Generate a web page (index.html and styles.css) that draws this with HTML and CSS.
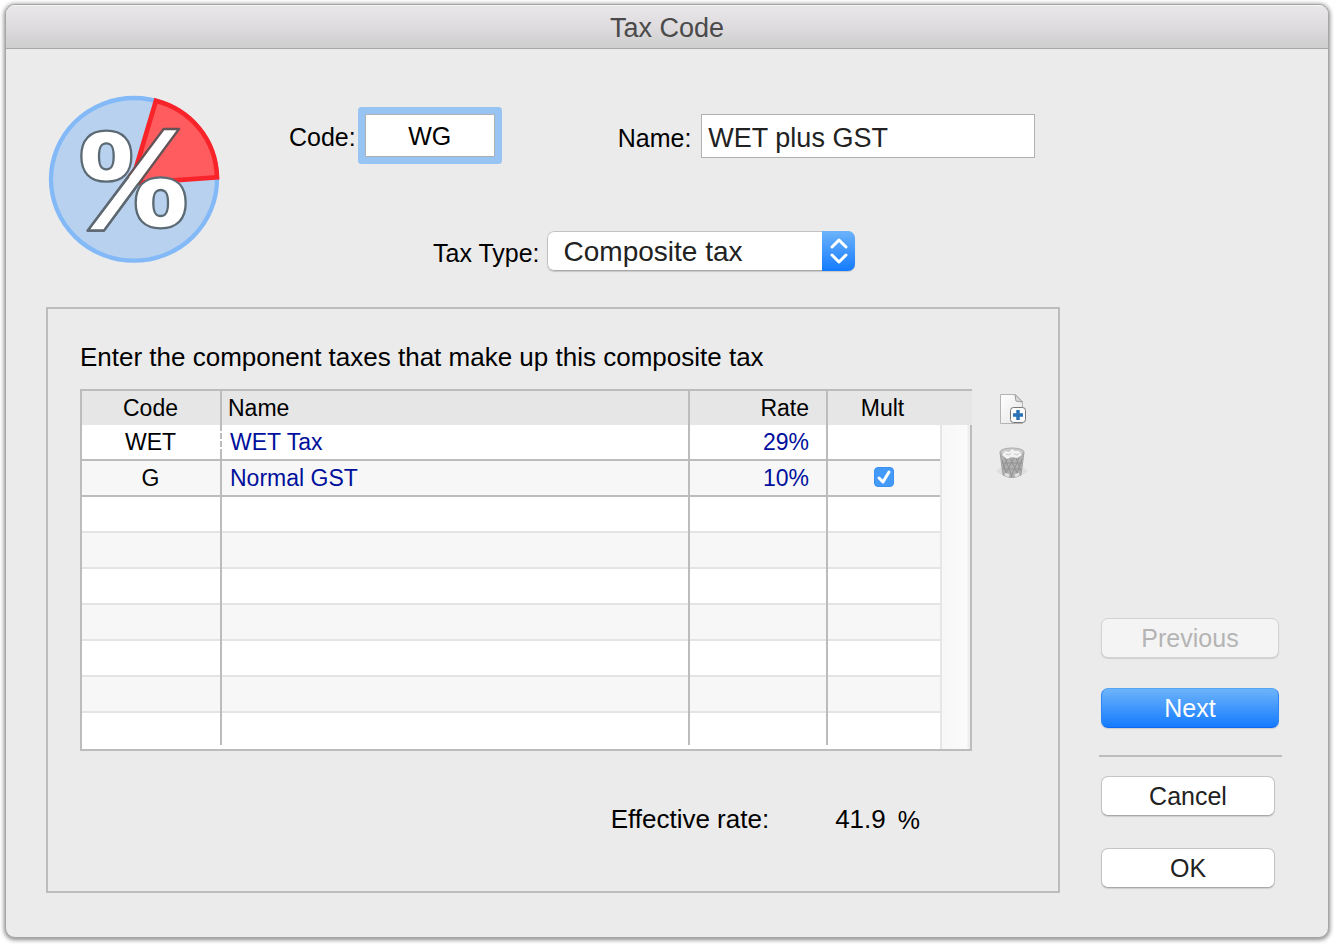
FILE: index.html
```html
<!DOCTYPE html>
<html lang="en">
<head>
<meta charset="utf-8">
<meta name="viewport" content="width=device-width, initial-scale=1">
<title>Tax Code</title>
<link rel="stylesheet" href="styles.css">
</head>
<body>
<form class="window">
  <header class="titlebar"><h1 class="title">Tax Code</h1></header>
  <div class="content">
    <main class="main">
      <div class="summary">
        <svg class="logo" viewBox="54 44 516 504" aria-hidden="true">
          <ellipse cx="312" cy="297" rx="249" ry="244" fill="#b7d1ef" stroke="#84b9f8" stroke-width="13"/>
          <path d="M304 309 L378 61 C480 88 558 175 561 291 Z" fill="#ff5c5f" stroke="#f9232a" stroke-width="14"/>
          <g fill="#fff" stroke="#5c6a74" stroke-width="7" stroke-linejoin="round" fill-rule="evenodd">
            <path d="M401 146 H447 L222 451 H173 Z" stroke="#655457"/>
            <path d="M296 289 L173 451 H222 L325 311" fill="none"/>
            <path d="M229 151 C279 151 304 180 304 227 C304 275 279 304 229 304 C179 304 154 275 154 227 C154 180 179 151 229 151 Z M229 189 C211 189 207 204 207 228 C207 252 211 267 229 267 C247 267 251 252 251 228 C251 204 247 189 229 189 Z"/>
            <path d="M392 291 C442 291 467 320 467 368 C467 415 442 444 392 444 C342 444 317 415 317 368 C317 320 342 291 392 291 Z M392 329 C374 329 370 344 370 368 C370 392 374 407 392 407 C410 407 414 392 414 368 C414 344 410 329 392 329 Z"/>
          </g>
        </svg>
        <div class="fields">
          <div class="row">
            <div class="field field-code">
              <label for="code">Code:</label>
              <input class="text code" id="code" type="text" value="WG">
            </div>
            <div class="field field-name">
              <label for="name">Name:</label>
              <input class="text name" id="name" type="text" value="WET plus GST">
            </div>
          </div>
          <div class="field field-type">
            <label for="type">Tax Type:</label>
            <div class="popup">
              <select class="popup-select" id="type"><option>Composite tax</option></select>
              <svg class="popup-arrows" viewBox="0 0 33 40" aria-hidden="true">
                <path d="M10 16 L17 9 L24 16 M10 24 L17 31 L24 24" fill="none" stroke="#fff" stroke-width="3" stroke-linecap="round" stroke-linejoin="round"/>
              </svg>
            </div>
          </div>
        </div>
      </div>

      <section class="panel">
        <p class="intro">Enter the component taxes that make up this composite tax</p>
        <div class="list">
          <table class="taxes">
            <colgroup><col class="c-code"><col><col class="c-rate"><col class="c-mult"><col class="c-scroll"></colgroup>
            <thead>
              <tr><th class="mid">Code</th><th class="left">Name</th><th class="right">Rate</th><th class="mid plain">Mult</th><th class="plain"></th></tr>
            </thead>
            <tbody>
              <tr class="filled"><td class="mid active">WET</td><td class="left link">WET Tax</td><td class="right link">29%</td><td class="plain"></td><td class="gutter" rowspan="9"></td></tr>
              <tr class="filled"><td class="mid">G</td><td class="left link">Normal GST</td><td class="right link">10%</td>
                <td class="plain"><span class="tick"><input class="tick-box" type="checkbox" checked aria-label="Mult"><svg class="tick-mark" viewBox="0 0 20 20" aria-hidden="true"><path d="M5 11 L9 15 L15 5" fill="none" stroke="#fff" stroke-width="3" stroke-linecap="round" stroke-linejoin="round"/></svg></span></td></tr>
              <tr><td></td><td></td><td></td><td class="plain"></td></tr>
              <tr><td></td><td></td><td></td><td class="plain"></td></tr>
              <tr><td></td><td></td><td></td><td class="plain"></td></tr>
              <tr><td></td><td></td><td></td><td class="plain"></td></tr>
              <tr><td></td><td></td><td></td><td class="plain"></td></tr>
              <tr><td></td><td></td><td></td><td class="plain"></td></tr>
              <tr class="last"><td></td><td></td><td></td><td class="plain"></td></tr>
            </tbody>
          </table>
          <div class="tools">
            <button class="tool" type="button" aria-label="Add tax">
              <svg viewBox="0 0 32 34" width="32" height="34" aria-hidden="true">
                <defs><linearGradient id="paper" x2="1" y2="1"><stop stop-color="#fff"/><stop offset="1" stop-color="#e4e4e4"/></linearGradient></defs>
                <path d="M4.500 2.500 H19 L26.500 10 V31.500 H4.500 Z" fill="url(#paper)" stroke="#b4b4b4"/>
                <path d="M19 2.500 L20 9 L26.500 10 Z" fill="#ddd" stroke="#999"/>
                <rect x="14.500" y="15.500" width="15" height="15" rx="3" fill="#fafafa" stroke="#777"/>
                <path d="M22 18 V28 M17 23 H27" stroke="#2a72b5" stroke-width="3.500"/>
              </svg>
            </button>
            <button class="tool" type="button" aria-label="Delete tax">
              <svg viewBox="0 0 32 34" width="32" height="34" aria-hidden="true">
                <ellipse cx="16" cy="25" rx="15" ry="5" fill="#dedede"/>
                <path d="M4 6 L7 29 Q16 34 25 29 L28 6 Z" fill="#b0b0b0" stroke="#a2a2a2"/>
                <path d="M6 14 L11 30 M9 12 L16 31 M14 12 L22 29 M20 12 L25 25 M26 13 L20 30 M23 12 L15 31 M18 12 L9 29 M12 12 L7 23 M6 17 L26 17 M7 23 L25 23" stroke="#929292" fill="none"/>
                <path d="M9 28 L13 30 M19 30 L23 28" stroke="#e2e2e2" stroke-width="3"/>
                <ellipse cx="16" cy="6" rx="12" ry="4" fill="#cacaca" stroke="#acacac"/>
                <path d="M6 9 L9 5 L13 6 L16 3 L19 5 L23 5 L26 9 L21 12 L16 11 L11 13 Z" fill="#f2f2f2"/>
                <path d="M10 8 L13 9 L15 7 M18 8 L21 9 L23 7" stroke="#c8c8c8" fill="none"/>
              </svg>
            </button>
          </div>
        </div>
        <div class="effective">
          <span>Effective rate:</span><output class="rate">41.9</output><span class="percent">%</span>
        </div>
      </section>
    </main>

    <aside class="actions">
      <div class="nav">
        <button class="button" type="button" disabled>Previous</button>
        <button class="button primary" type="button">Next</button>
      </div>
      <hr class="rule">
      <div class="confirm">
        <button class="button" type="button">Cancel</button>
        <button class="button" type="submit">OK</button>
      </div>
    </aside>
  </div>
</form>
</body>
</html>
```

FILE: styles.css
```css
* { box-sizing: border-box; }

body {
  margin: 0;
  min-height: 100vh;
  padding: 4px 5px 6px;
  display: flex;
  background: #fff;
  color: #000;
  font: 25px/30px "Liberation Sans", Arial, Helvetica, sans-serif;
}

input, select, button { font: inherit; }

.window {
  flex: 1;
  display: flex;
  flex-direction: column;
  border: 1px solid #a6a6a6;
  border-radius: 10px;
  background: #ebebeb;
  box-shadow: 0 1px 4px 1px rgba(0, 0, 0, 0.45);
  overflow: hidden;
}

.titlebar {
  height: 44px;
  display: flex;
  align-items: center;
  justify-content: center;
  padding-top: 2px;
  border-bottom: 1px solid #a8a8a8;
  background: linear-gradient(#e9e7e9, #e0dde0 45%, #cecece);
  box-shadow: inset 0 1px #f4f4f4;
}

.title {
  margin: 0;
  color: #4a4a4a;
  font-size: 27px;
  font-weight: normal;
}

.content {
  flex: 1;
  display: grid;
  grid-template-columns: minmax(0, 1fr) 183px;
  column-gap: 39px;
  padding: 46px 46px 44px 40px;
}

.main {
  display: flex;
  flex-direction: column;
}

.summary {
  display: flex;
  gap: 69px;
  padding-left: 2px;
  margin-bottom: 36px;
}

.logo {
  flex: none;
  width: 172px;
  height: 168px;
}

.fields {
  flex: 1;
  min-width: 0;
  padding-top: 19px;
}

.row {
  display: flex;
  align-items: flex-start;
  gap: 123px;
  margin-bottom: 73px;
}

.field {
  display: flex;
  align-items: center;
}

.field label { padding-top: 3px; }

.field-code { gap: 9px; }

.field-name {
  flex: 1;
  min-width: 0;
  gap: 10px;
  padding-right: 25px;
}

.field-type {
  gap: 7px;
  padding-left: 144px;
}

.text {
  min-width: 0;
  border: 1px solid #b0b0b0;
  background: #fff;
  outline: none;
}

.code {
  width: 130px;
  height: 43px;
  padding: 2px 4px 0;
  text-align: center;
  box-shadow: 0 0 0 7px #98c4f3;
  border-radius: 1px;
}

.name {
  flex: 1;
  height: 44px;
  padding: 4px 6px 0;
  color: #222;
  font-size: 27px;
}

.popup {
  display: grid;
  width: 308px;
  height: 40px;
  border-radius: 7px;
  overflow: hidden;
  box-shadow: 0 1px 1px rgba(0, 0, 0, 0.15);
}

.popup > * { grid-area: 1 / 1; }

.popup-select {
  appearance: none;
  width: 100%;
  padding: 2px 44px 0 16px;
  border: 1px solid #c2c2c2;
  border-bottom-color: #a9a9a9;
  border-radius: 7px;
  background: #fff;
  color: #222;
  font-size: 28px;
}

.popup-arrows {
  justify-self: end;
  width: 33px;
  height: 40px;
  background: linear-gradient(#6cb3fa, #147bff);
  pointer-events: none;
}

.panel {
  flex: 1;
  padding: 33px 30px 30px 32px;
  border: 2px solid #bcbcbc;
  font-size: 26px;
}

.intro { margin: 0 0 17px; }

.list {
  display: flex;
  gap: 24px;
}

.taxes {
  flex: 1;
  table-layout: fixed;
  border-collapse: separate;
  border-spacing: 0;
  border: solid #bcbcbc;
  border-width: 2px 0 2px 2px;
  font-size: 23px;
}

.c-code { width: 140px; }
.c-rate { width: 138px; }
.c-mult { width: 112px; }
.c-scroll { width: 32px; }

.taxes th, .taxes td {
  --line: #bcbcbc;
  --under: #e4e4e4;
  --fill: #fff;
  height: 36px;
  padding: 0 0 2px;
  font-weight: normal;
  line-height: 28px;
  background:
    linear-gradient(var(--line), var(--line)) right top / 2px 100% no-repeat,
    linear-gradient(var(--under), var(--under)) left bottom / 100% 2px no-repeat,
    var(--fill);
}

.taxes th {
  --under: transparent;
  --fill: #e6e6e6;
  height: 34px;
  padding: 0;
}

.taxes tr:nth-child(even) td { --fill: #f7f7f7; }
.taxes .filled td { --under: #bcbcbc; }
.taxes .plain { --line: transparent; }
.taxes .mid { text-align: center; padding-right: 3px; }
.taxes .left { text-align: left; padding-left: 8px; }
.taxes th.left { padding-left: 6px; }
.taxes .right { text-align: right; padding-right: 19px; }
.taxes .link { color: #00109c; }

.taxes .last td {
  --under: transparent;
  background-size: 2px calc(100% - 4px), 100% 2px, auto;
}

.taxes .active {
  background:
    repeating-linear-gradient(transparent 0 6px, #fff 6px 8px) right top / 2px 28px no-repeat,
    linear-gradient(#bcbcbc, #bcbcbc) right top / 2px 100% no-repeat,
    linear-gradient(#bcbcbc, #bcbcbc) left bottom / 100% 2px no-repeat,
    #fff;
}

.taxes .gutter {
  border-left: 2px solid #e6e6e6;
  border-right: 2px solid #bcbcbc;
  background: linear-gradient(90deg, #f7f7f7, #fbfbfb 90%, #eee 92%);
}

.tick {
  display: grid;
  justify-content: center;
  padding-bottom: 2px;
}

.tick > * {
  grid-area: 1 / 1;
  width: 20px;
  height: 20px;
  margin: 0;
}

.tick-box {
  appearance: none;
  border-radius: 4px;
  border: 1px solid #3b8ff0;
  background: #439af8;
}

.tick-mark { pointer-events: none; }

.tools {
  width: 32px;
  display: flex;
  flex-direction: column;
  gap: 20px;
  padding-top: 3px;
}

.tool {
  height: 34px;
  padding: 0;
  border: 0;
  background: none;
}

.tool svg { display: block; }

.effective {
  display: flex;
  justify-content: flex-end;
  align-items: flex-end;
  margin-top: 53px;
  padding-right: 108px;
}

.rate { margin: 0 12px 0 66px; }
.percent { line-height: 28px; font-size: 25px; }

.actions {
  display: flex;
  flex-direction: column;
  justify-content: flex-end;
  padding-bottom: 5px;
}

.nav, .confirm {
  display: flex;
  flex-direction: column;
  padding-left: 2px;
}

.nav { gap: 30px; padding-right: 3px; }
.confirm { gap: 32px; padding-right: 7px; }

.rule {
  width: 100%;
  height: 2px;
  margin: 27px 0 19px;
  border: 0;
  background: #bcbcbc;
}

.button {
  height: 40px;
  padding: 0;
  border: 1px solid #c4c4c4;
  border-bottom-color: #a9a9a9;
  border-radius: 7px;
  background: #fff;
  color: #222;
  box-shadow: 0 1px 1px rgba(0, 0, 0, 0.12);
}

.button:disabled {
  border-color: #d2d2d2;
  background: #f4f4f4;
  color: #b4b4b4;
}

.primary {
  border-color: #55a3f5 #2b86f8 #1068f0;
  background: linear-gradient(#6db4fa, #147bff);
  color: #fff;
}
```
